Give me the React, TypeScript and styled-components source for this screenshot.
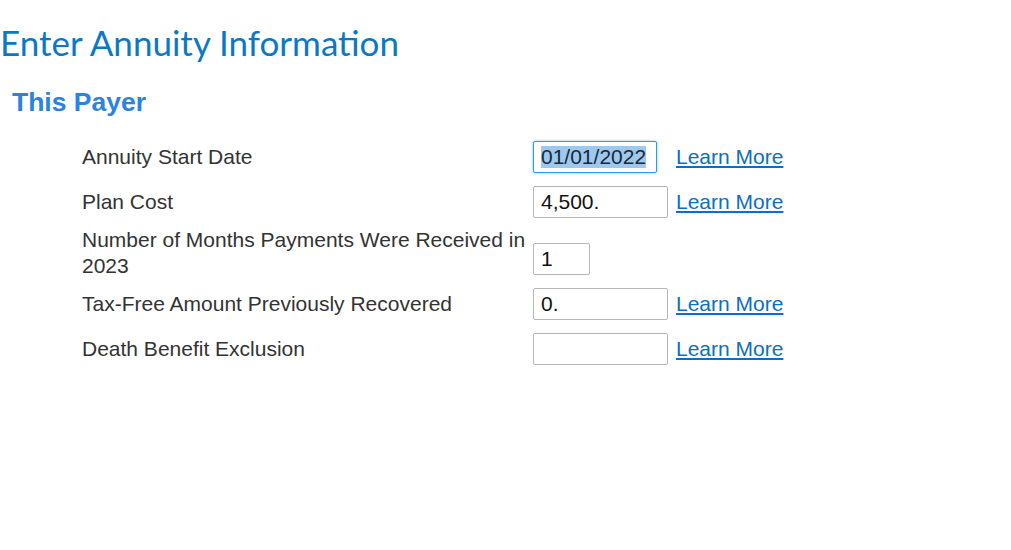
import styled, { createGlobalStyle, css } from "styled-components";

// #region ##################################################################################### GLOBAL
const GlobalStyle = createGlobalStyle`
  html, body {
    margin: 0;
    padding: 0;
    background: #ffffff;
  }
  body {
    font-family: "Liberation Sans", Arial, sans-serif;
    color: #333333;
  }
`;
// #endregion

// #region ##################################################################################### DATA
type Size = "s" | "m" | "l";

type Row = {
  label: string;
  value: string;
  size: Size;
  focused?: boolean;
  learnMore?: boolean;
};

const rows: Row[] = [
  { label: "Annuity Start Date", value: "01/01/2022", size: "m", focused: true, learnMore: true },
  { label: "Plan Cost", value: "4,500.", size: "l", learnMore: true },
  { label: "Number of Months Payments Were Received in 2023", value: "1", size: "s" },
  { label: "Tax-Free Amount Previously Recovered", value: "0.", size: "l", learnMore: true },
  { label: "Death Benefit Exclusion", value: "", size: "l", learnMore: true },
];
// #endregion

// #region ##################################################################################### COMPONENT
const App = () => {
  // ---------------------------------------------------------------------- RETURN
  return (
    <Screen>
      <GlobalStyle />
      <Title>Enter Annuity Information</Title>
      <SubTitle>This Payer</SubTitle>

      <Form>
        {rows.map((r) => (
          <FieldRow key={r.label}>
            <Label>{r.label}</Label>
            <InputCell>
              {r.focused ? (
                <FakeInput $size={r.size} $focused>
                  <Selected>{r.value}</Selected>
                </FakeInput>
              ) : (
                <Input $size={r.size} defaultValue={r.value} readOnly />
              )}
            </InputCell>
            {r.learnMore && <LearnMore href="#">Learn More</LearnMore>}
          </FieldRow>
        ))}
      </Form>
    </Screen>
  );
};
// #endregion

// #region ##################################################################################### STYLES
const Screen = styled.div`
  width: 1011px;
  height: 550px;
  padding-top: 22px;
  box-sizing: border-box;
`;

const Title = styled.h1`
  margin: 0;
  font-family: Lato, "Open Sans", sans-serif;
  font-weight: 400;
  font-size: 35px;
  line-height: 40px;
  color: #0b78c6;
`;

const SubTitle = styled.h2`
  margin: 25px 0 0 12px;
  font-family: "Liberation Sans", Arial, sans-serif;
  font-weight: 700;
  font-size: 26.5px;
  line-height: 30px;
  color: #2a83dd;
`;

const Form = styled.div`
  display: flex;
  flex-direction: column;
  gap: 13px;
  margin: 24px 0 0 82px;
`;

const FieldRow = styled.div`
  display: grid;
  grid-template-columns: 451px 143px auto;
  align-items: center;
  min-height: 32px;
`;

const Label = styled.div`
  font-size: 21px;
  line-height: 26px;
  margin: -4px 0;
  color: #333333;
  padding-right: 4px;
`;

const InputCell = styled.div`
  display: flex;
  align-self: end;
`;

const boxSize: Record<Size, string> = {
  s: "57px",
  m: "124px",
  l: "135px",
};

const box = css<{ $size: Size }>`
  box-sizing: border-box;
  width: ${(p) => boxSize[p.$size]};
  height: 32px;
  border: 1px solid #b6b6b6;
  border-radius: 2px;
  padding: 0 7px;
  font-family: "Liberation Sans", Arial, sans-serif;
  font-size: 21px;
  color: #111111;
  background: #ffffff;
`;

const Input = styled.input<{ $size: Size }>`
  ${box}
  outline: none;
`;

const FakeInput = styled.div<{ $size: Size; $focused?: boolean }>`
  ${box}
  display: flex;
  align-items: center;
  ${(p) =>
    p.$focused &&
    css`
      border-color: #2a9de8;
      box-shadow: 0 0 3px rgba(42, 157, 232, 0.6);
    `}
`;

const Selected = styled.span`
  background: #9cc9f0;
  color: #1b2733;
  line-height: 22px;
`;

const LearnMore = styled.a`
  font-size: 21px;
  color: #0b6fc4;
  text-decoration: underline;
`;
// #endregion

// #region ##################################################################################### EXPORTS
export default App;
// #endregion
